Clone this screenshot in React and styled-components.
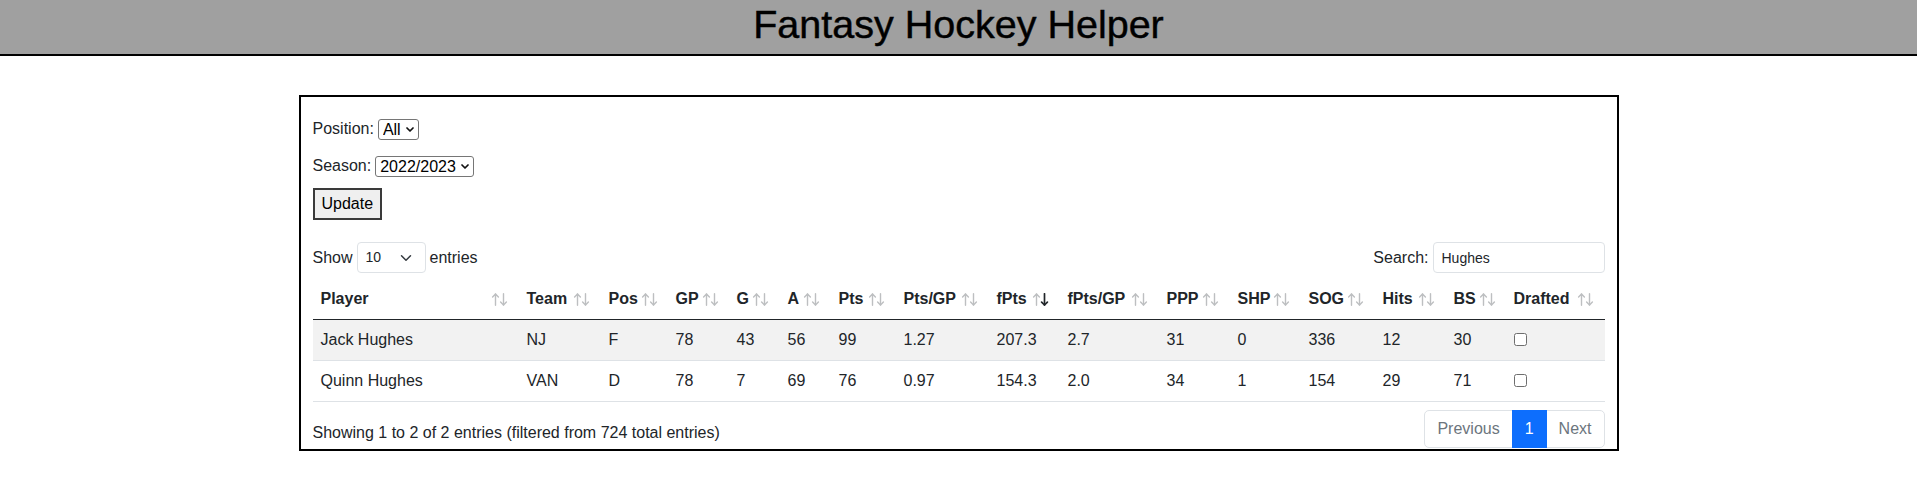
import React from 'react';
import styled, { createGlobalStyle } from 'styled-components';

const GlobalStyle = createGlobalStyle`
  *, *::before, *::after { box-sizing: border-box; }
  html, body { margin: 0; padding: 0; background: #fff; }
  body {
    font-family: "Liberation Sans", Arial, sans-serif;
    font-size: 16px;
    line-height: 1.5;
    color: #212529;
  }
`;

const Header = styled.header`
  height: 56px;
  background: #a0a0a0;
  border-bottom: 2px solid #000;
  display: flex;
  justify-content: center;
`;

const Title = styled.h1`
  margin: 0;
  font-size: 39.5px;
  line-height: 48px;
  font-weight: 400;
  color: #000;
  -webkit-text-stroke: 0.45px #000;
`;

const Container = styled.main`
  width: 1320px;
  margin: 39px auto 0;
  border: 2px solid #000;
  padding: 20px 12px 1px;
`;

const FilterForm = styled.form`
  display: flex;
  flex-direction: column;
  align-items: flex-start;
`;

const FilterRow = styled.div`
  display: flex;
  align-items: center;
  gap: 4px;
  height: 24px;
  & + & { margin-top: 13px; }
`;

const SelectWrap = styled.span`
  position: relative;
  display: inline-flex;
`;

const NativeSelect = styled.select`
  appearance: none;
  -webkit-appearance: none;
  font-family: inherit;
  font-size: 16px;
  height: 21px;
  line-height: 19px;
  padding: 0 17px 0 4px;
  border: 1px solid #767676;
  border-radius: 3px;
  background: #fff;
  color: #000;
`;

const NativeChevron = styled.svg`
  position: absolute;
  right: 5px;
  top: 8px;
  pointer-events: none;
`;

const UpdateButton = styled.button`
  margin-top: 10px;
  height: 32px;
  padding: 0 7px;
  font-family: inherit;
  font-size: 16px;
  color: #000;
  background: #efefef;
  border: 2px solid #3a3a3a;
  border-radius: 0;
`;

const TopBar = styled.div`
  display: flex;
  justify-content: space-between;
  align-items: center;
  height: 31px;
  margin-top: 22px;
`;

const InlineLabel = styled.label`
  display: flex;
  align-items: center;
  gap: 4px;
`;

const SmSelect = styled.select`
  appearance: none;
  -webkit-appearance: none;
  width: 69px;
  height: 31px;
  padding: 4px 36px 4px 8px;
  font-family: inherit;
  font-size: 14px;
  line-height: 21px;
  color: #212529;
  background: #fff;
  border: 1px solid #dee2e6;
  border-radius: 4px;
`;

const SmChevron = styled.svg`
  position: absolute;
  right: 12px;
  top: 9.5px;
  pointer-events: none;
`;

const SearchInput = styled.input`
  width: 172px;
  height: 31px;
  padding: 4px 8px;
  font-family: inherit;
  font-size: 14px;
  line-height: 21px;
  color: #212529;
  background: #fff;
  border: 1px solid #dee2e6;
  border-radius: 4px;
  outline: none;
`;

const Table = styled.table`
  width: 100%;
  margin: 6px 0;
  border-collapse: collapse;
  table-layout: fixed;
`;

const Th = styled.th`
  width: ${(p) => p.$w}px;
  padding: 8px;
  text-align: left;
  font-weight: 700;
  border-bottom: 1px solid #212529;
  vertical-align: middle;
`;

const HeadInner = styled.div`
  display: flex;
  align-items: center;
  justify-content: space-between;
  gap: 3px;
  padding-right: 3px;
  white-space: nowrap;
`;

const Td = styled.td`
  padding: 8px;
  text-align: left;
  border-bottom: 1px solid #dee2e6;
  background: ${(p) => (p.$striped ? '#f2f2f2' : '#fff')};
  vertical-align: middle;
  white-space: nowrap;
`;

const Check = styled.input`
  appearance: none;
  -webkit-appearance: none;
  display: inline-block;
  width: 13px;
  height: 13px;
  margin: 0;
  vertical-align: middle;
  position: relative;
  top: -1px;
  border: 1px solid #6e6e6e;
  border-radius: 2.5px;
  background: #fff;
`;

const BottomBar = styled.div`
  display: flex;
  justify-content: space-between;
  align-items: flex-start;
  padding-top: 2px;
`;

const Info = styled.div`
  padding-top: 11px;
`;

const Pagination = styled.ul`
  display: flex;
  list-style: none;
  margin: 0;
  padding: 0;
`;

const PageItem = styled.li`
  & + & { margin-left: -1px; }
`;

const PageLink = styled.span`
  display: block;
  padding: 6px 12px;
  line-height: 24px;
  border: 1px solid ${(p) => (p.$active ? '#0d6efd' : '#dee2e6')};
  background: ${(p) => (p.$active ? '#0d6efd' : '#fff')};
  color: ${(p) => (p.$active ? '#fff' : '#6c757d')};
  position: relative;
  z-index: ${(p) => (p.$active ? 1 : 0)};
  border-radius: ${(p) =>
    p.$first ? '5px 0 0 5px' : p.$last ? '0 5px 5px 0' : '0'};
`;

const SortSvg = styled.svg`
  flex: none;
  position: relative;
  top: 0.5px;
`;

const SortIcon = ({ dir }) => (
  <SortSvg width="17" height="13" viewBox="0 0 17 13" fill="none" strokeLinecap="round" strokeLinejoin="round">
    <g stroke={dir === 'asc' ? '#212529' : '#bdbfc1'} strokeWidth={dir === 'asc' ? 1.7 : 1.4}>
      <path d="M4.5 12.2V1" />
      <path d="M1.6 3.9L4.5 1L7.4 3.9" />
    </g>
    <g stroke={dir === 'desc' ? '#212529' : '#bdbfc1'} strokeWidth={dir === 'desc' ? 1.7 : 1.4}>
      <path d="M12.5 0.8V12" />
      <path d="M9.6 9.1L12.5 12L15.4 9.1" />
    </g>
  </SortSvg>
);

const columns = [
  { key: 'player', label: 'Player', w: 206 },
  { key: 'team', label: 'Team', w: 82 },
  { key: 'pos', label: 'Pos', w: 67 },
  { key: 'gp', label: 'GP', w: 61 },
  { key: 'g', label: 'G', w: 51 },
  { key: 'a', label: 'A', w: 51 },
  { key: 'pts', label: 'Pts', w: 65 },
  { key: 'ptsgp', label: 'Pts/GP', w: 93 },
  { key: 'fpts', label: 'fPts', w: 71, sort: 'desc' },
  { key: 'fptsgp', label: 'fPts/GP', w: 99 },
  { key: 'ppp', label: 'PPP', w: 71 },
  { key: 'shp', label: 'SHP', w: 71 },
  { key: 'sog', label: 'SOG', w: 74 },
  { key: 'hits', label: 'Hits', w: 71 },
  { key: 'bs', label: 'BS', w: 60 },
  { key: 'drafted', label: 'Drafted', w: 99 },
];

const rows = [
  { player: 'Jack Hughes', team: 'NJ', pos: 'F', gp: '78', g: '43', a: '56', pts: '99', ptsgp: '1.27', fpts: '207.3', fptsgp: '2.7', ppp: '31', shp: '0', sog: '336', hits: '12', bs: '30' },
  { player: 'Quinn Hughes', team: 'VAN', pos: 'D', gp: '78', g: '7', a: '69', pts: '76', ptsgp: '0.97', fpts: '154.3', fptsgp: '2.0', ppp: '34', shp: '1', sog: '154', hits: '29', bs: '71' },
];

const Chevron = () => (
  <NativeChevron width="8" height="5" viewBox="0 0 8 5" fill="none">
    <path d="M1 1L4 4L7 1" stroke="#111" strokeWidth="1.7" strokeLinecap="round" strokeLinejoin="round" />
  </NativeChevron>
);

export default function App() {
  return (
    <>
      <GlobalStyle />
      <Header>
        <Title>Fantasy Hockey Helper</Title>
      </Header>
      <Container>
        <FilterForm onSubmit={(e) => e.preventDefault()}>
          <FilterRow>
            <span>Position:</span>
            <SelectWrap>
              <NativeSelect defaultValue="All">
                <option>All</option>
                <option>F</option>
                <option>D</option>
              </NativeSelect>
              <Chevron />
            </SelectWrap>
          </FilterRow>
          <FilterRow>
            <span>Season:</span>
            <SelectWrap>
              <NativeSelect defaultValue="2022/2023">
                <option>2022/2023</option>
                <option>2021/2022</option>
              </NativeSelect>
              <Chevron />
            </SelectWrap>
          </FilterRow>
          <UpdateButton type="submit">Update</UpdateButton>
        </FilterForm>

        <TopBar>
          <InlineLabel>
            Show
            <SelectWrap>
              <SmSelect defaultValue="10">
                <option>10</option>
                <option>25</option>
                <option>50</option>
                <option>100</option>
              </SmSelect>
              <SmChevron width="16" height="12" viewBox="0 0 16 16" fill="none">
                <path d="M2 5l6 6 6-6" stroke="#343a40" strokeWidth="2" strokeLinecap="round" strokeLinejoin="round" />
              </SmChevron>
            </SelectWrap>
            entries
          </InlineLabel>
          <InlineLabel>
            Search:
            <SearchInput type="search" defaultValue="Hughes" />
          </InlineLabel>
        </TopBar>

        <Table>
          <thead>
            <tr>
              {columns.map((c) => (
                <Th key={c.key} $w={c.w}>
                  <HeadInner>
                    <span>{c.label}</span>
                    <SortIcon dir={c.sort} />
                  </HeadInner>
                </Th>
              ))}
            </tr>
          </thead>
          <tbody>
            {rows.map((r, i) => (
              <tr key={r.player}>
                {columns.map((c) => (
                  <Td key={c.key} $striped={i % 2 === 0}>
                    {c.key === 'drafted' ? <Check type="checkbox" /> : r[c.key]}
                  </Td>
                ))}
              </tr>
            ))}
          </tbody>
        </Table>

        <BottomBar>
          <Info>Showing 1 to 2 of 2 entries (filtered from 724 total entries)</Info>
          <Pagination>
            <PageItem><PageLink $first>Previous</PageLink></PageItem>
            <PageItem><PageLink $active>1</PageLink></PageItem>
            <PageItem><PageLink $last>Next</PageLink></PageItem>
          </Pagination>
        </BottomBar>
      </Container>
    </>
  );
}
